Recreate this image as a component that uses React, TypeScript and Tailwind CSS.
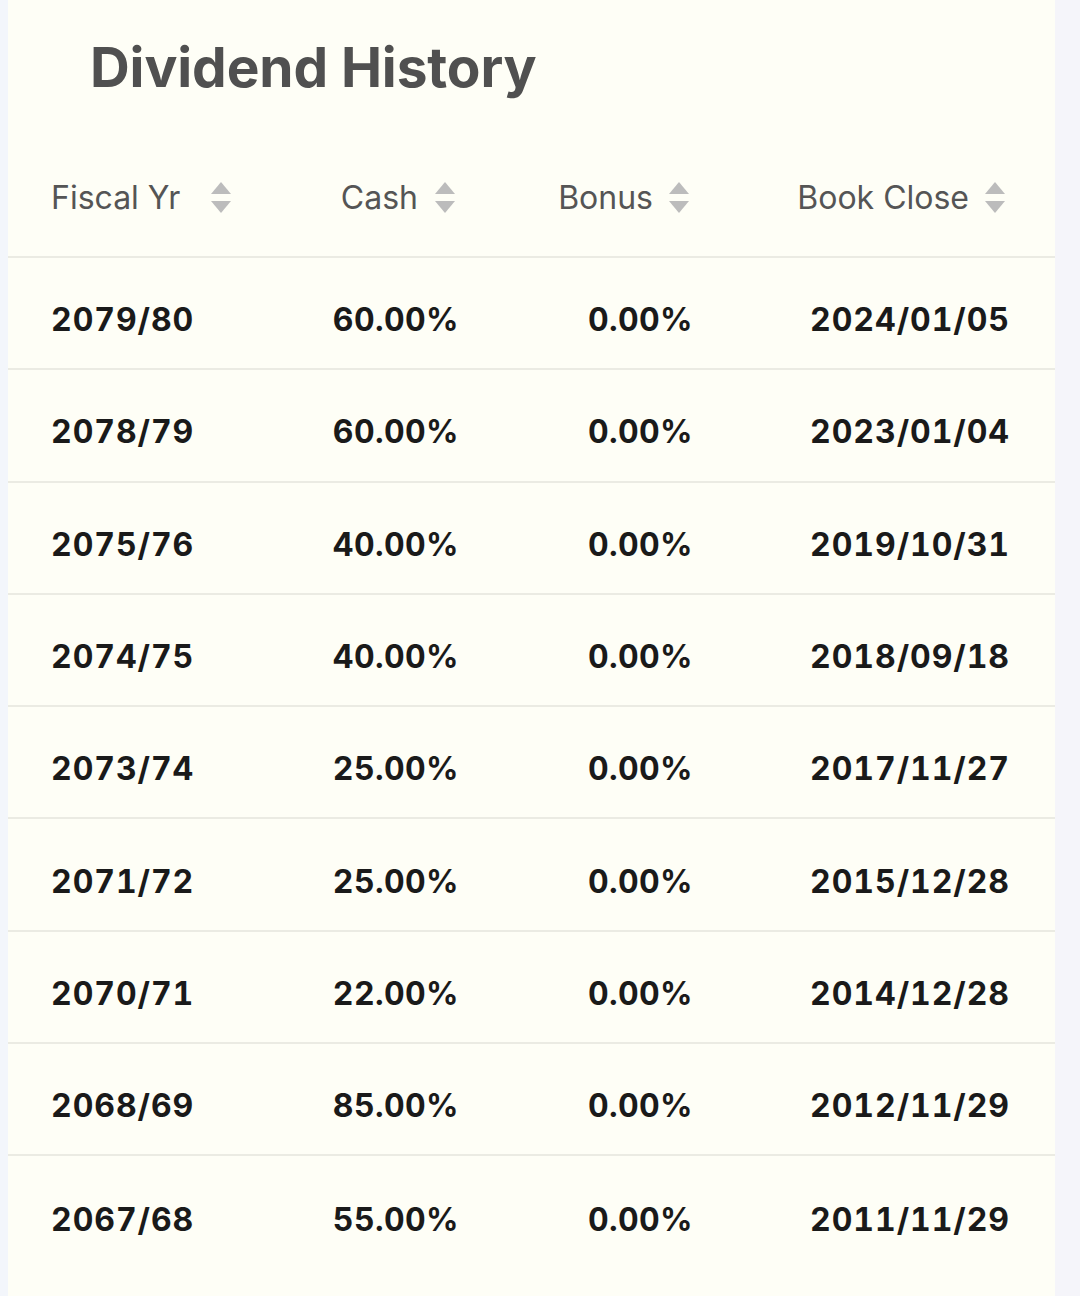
import React from 'react';

type Row = { year: string; cash: string; bonus: string; bookClose: string };

const rows: Row[] = [
  { year: '2079/80', cash: '60.00%', bonus: '0.00%', bookClose: '2024/01/05' },
  { year: '2078/79', cash: '60.00%', bonus: '0.00%', bookClose: '2023/01/04' },
  { year: '2075/76', cash: '40.00%', bonus: '0.00%', bookClose: '2019/10/31' },
  { year: '2074/75', cash: '40.00%', bonus: '0.00%', bookClose: '2018/09/18' },
  { year: '2073/74', cash: '25.00%', bonus: '0.00%', bookClose: '2017/11/27' },
  { year: '2071/72', cash: '25.00%', bonus: '0.00%', bookClose: '2015/12/28' },
  { year: '2070/71', cash: '22.00%', bonus: '0.00%', bookClose: '2014/12/28' },
  { year: '2068/69', cash: '85.00%', bonus: '0.00%', bookClose: '2012/11/29' },
  { year: '2067/68', cash: '55.00%', bonus: '0.00%', bookClose: '2011/11/29' },
];

const cols = 'grid grid-cols-[200px_208px_234px_317px]';

const SortIcon: React.FC = () => (
  <svg width="22" height="34" viewBox="0 0 22 34" className="shrink-0">
    <path d="M11 1 L21 13 L1 13 Z" fill="#bcbcbc" />
    <path d="M1 20 L21 20 L11 32 Z" fill="#bcbcbc" />
  </svg>
);

const HeaderCell: React.FC<{ label: string; align: 'left' | 'right'; extra: string }> = ({ label, align, extra }) => (
  <div className={`flex items-center ${align === 'right' ? 'justify-end' : 'justify-start'} ${extra}`}>
    <span>{label}</span>
    <SortIcon />
  </div>
);

export default function App() {
  return (
    <div className="w-[1080px] h-[1296px] overflow-hidden flex bg-[#f5f5fa]" style={{ fontFamily: 'Inter, "Noto Sans", sans-serif' }}>
      <div className="w-[8px] bg-[#f3f6fb]" />
      <div className="w-[1047px] bg-[#fefef6] flex flex-col">
        <h1 className="pl-[82px] pt-[33px] h-[140px] text-[55px] font-bold leading-[68px] text-[#505050] tracking-[-0.002em]">
          Dividend History
        </h1>

        <div className={`${cols} pl-[43px] pr-[45px] h-[118px] items-center text-[32px] text-[#555555] border-b-2 border-[#ebebe3]`}>
          <HeaderCell label="Fiscal Yr" align="left" extra="gap-[30px]" />
          <HeaderCell label="Cash" align="right" extra="gap-[16px] pr-[3px]" />
          <HeaderCell label="Bonus" align="right" extra="gap-[15px] pr-[3px]" />
          <HeaderCell label="Book Close" align="right" extra="gap-[15px] pr-[4px]" />
        </div>

        {rows.map((r) => (
          <div
            key={r.year}
            className={`${cols} pl-[43px] pr-[45px] pt-[14px] h-[112.3px] items-center text-[32px] font-bold text-[#1a1a1a] tracking-[0.03em] tabular-nums border-b-2 border-[#ebebe3] last:border-b-0 shrink-0`}
          >
            <div>{r.year}</div>
            <div className="text-right tracking-[0.012em]">{r.cash}</div>
            <div className="text-right tracking-[0.012em]">{r.bonus}</div>
            <div className="text-right">{r.bookClose}</div>
          </div>
        ))}
      </div>
    </div>
  );
}
